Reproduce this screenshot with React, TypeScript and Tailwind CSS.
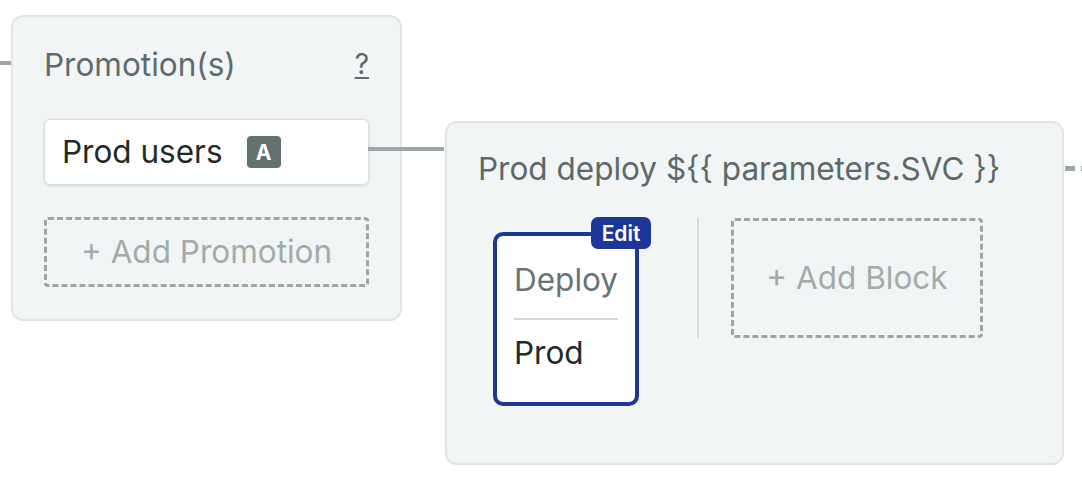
import React from "react";

export default function App() {
  return (
    <div className="relative w-[1082px] h-[488px] bg-white overflow-hidden font-['Inter','Noto_Sans',sans-serif]">
      <div className="flex items-start pl-[11px] pt-[15px]">
        {/* Promotions panel */}
        <div className="relative w-[391px] shrink-0 rounded-[12px] border-2 border-[#e1e5e5] bg-[#f2f5f6] px-[31px] pt-[29px] pb-[32px]">
          <div className="absolute -left-[13px] top-[44px] w-[11px] h-[4px] bg-[#9ba7a6]" />
          <div className="flex items-center justify-between h-[36px]">
            <span className="text-[31.5px] leading-[36px] text-[#5f6b6b] translate-y-[1px]">Promotion(s)</span>
            <span className="text-[28px] leading-[36px] text-[#5f6b6b] underline underline-offset-[3px] decoration-[2px]">?</span>
          </div>
          <div className="relative mt-[37px] h-[66px] rounded-[6px] bg-white border border-[#d9dede] shadow-[0_1px_3px_rgba(0,0,0,0.12)] flex items-center pl-[17px]">
            <span className="text-[31.5px] leading-[36px] text-[#1f2a2a]">Prod users</span>
            <span className="ml-[24px] shrink-0 w-[34px] h-[32px] rounded-[4px] bg-[#627070] text-white font-bold text-[21px] leading-none flex items-center justify-center">A</span>
            <div className="absolute left-full top-[27px] w-[76px] h-[4px] bg-[#9ba7a6]" />
          </div>
          <div className="mt-[32px] h-[70px] rounded-[4px] border-[3px] border-dashed border-[#9da6a5] flex items-center justify-center text-[31.5px] leading-[36px] text-[#a3abaa]">
            + Add Promotion
          </div>
        </div>

        {/* Stage panel */}
        <div className="relative mt-[106px] ml-[43px] w-[619px] h-[344px] shrink-0 rounded-[12px] border-2 border-[#e1e5e5] bg-[#f2f5f6] pl-[31px] pt-[28px]">
          <div className="absolute left-[calc(100%+3px)] top-[43px] flex gap-[6px]">
            <div className="w-[10px] h-[5px] bg-[#9ba7a6]" />
            <div className="w-[10px] h-[5px] bg-[#9ba7a6]" />
          </div>
          <div className="text-[31.5px] leading-[36px] text-[#5d6969] whitespace-nowrap">
            {"Prod deploy ${{ parameters.SVC }}"}
          </div>
          <div className="mt-[31px] flex items-start">
            <div className="pl-[15px] pt-[14px]">
              <div className="relative w-[146px] h-[174px] rounded-[10px] border-4 border-[#1b3797] bg-white px-[17px] pt-[26px]">
                <div className="absolute -top-[19px] -right-[16px] w-[60px] h-[32px] rounded-[7px] bg-[#1b3797] text-white font-semibold text-[21px] leading-none flex items-center justify-center">
                  Edit
                </div>
                <div className="text-[31.5px] leading-[36px] text-[#687474]">Deploy</div>
                <div className="mt-[20px] h-[2px] bg-[#d5dada]" />
                <div className="mt-[15px] text-[31.5px] leading-[36px] text-[#1f2a2a]">Prod</div>
              </div>
            </div>
            <div className="ml-[58px] w-[2px] h-[120px] bg-[#d7dbdb]" />
            <div className="ml-[32px] w-[252px] h-[120px] rounded-[4px] border-[3px] border-dashed border-[#9da6a5] flex items-center justify-center text-[31.5px] leading-[36px] text-[#a3abaa]">
              + Add Block
            </div>
          </div>
        </div>
      </div>
    </div>
  );
}
